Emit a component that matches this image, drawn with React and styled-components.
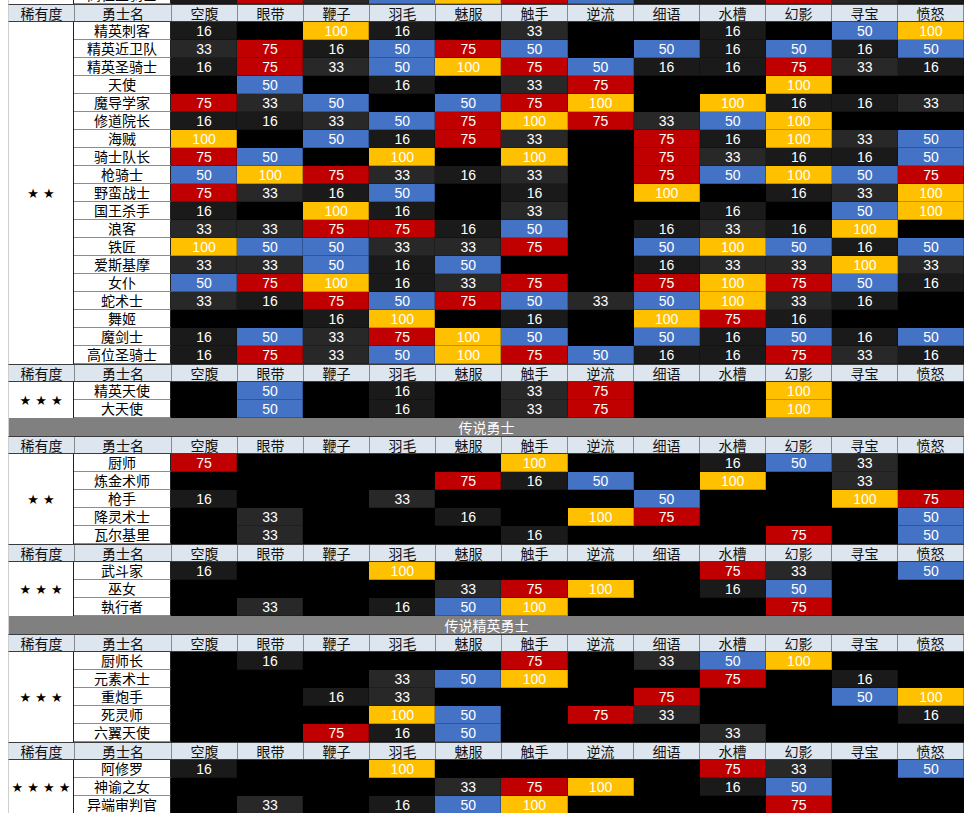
import React from "react";
import styled, { createGlobalStyle } from "styled-components";

const GlobalStyle = createGlobalStyle`
  html, body {
    margin: 0;
    padding: 0;
    background: #ffffff;
    overflow: hidden;
  }
  body {
    font-family: "Liberation Sans", "Noto Sans CJK SC", sans-serif;
  }
`;

const COLUMNS = ["空腹", "眼带", "鞭子", "羽毛", "魅服", "触手", "逆流", "细语", "水槽", "幻影", "寻宝", "愤怒"];

const CELL_BG = {
  0: "#000000",
  16: "#1a1a1a",
  33: "#282828",
  50: "#4472c4",
  75: "#c00000",
  100: "#ffc000",
};

const SHEET = [
  { kind: "rows", stars: 0, rows: [["高位圣骑士", [16, 75, 33, 50, 100, 75, 50, 16, 16, 75, 33, 16]]] },
  {
    kind: "group",
    stars: 2,
    rows: [
      ["精英刺客", [16, 0, 100, 16, 0, 33, 0, 0, 16, 0, 50, 100]],
      ["精英近卫队", [33, 75, 16, 50, 75, 50, 0, 50, 16, 50, 16, 50]],
      ["精英圣骑士", [16, 75, 33, 50, 100, 75, 50, 16, 16, 75, 33, 16]],
      ["天使", [0, 50, 0, 16, 0, 33, 75, 0, 0, 100, 0, 0]],
      ["魔导学家", [75, 33, 50, 0, 50, 75, 100, 0, 100, 16, 16, 33]],
      ["修道院长", [16, 16, 33, 50, 75, 100, 75, 33, 50, 100, 0, 0]],
      ["海贼", [100, 0, 50, 16, 75, 33, 0, 75, 16, 100, 33, 50]],
      ["骑士队长", [75, 50, 0, 100, 0, 100, 0, 75, 33, 16, 16, 50]],
      ["枪骑士", [50, 100, 75, 33, 16, 33, 0, 75, 50, 100, 50, 75]],
      ["野蛮战士", [75, 33, 16, 50, 0, 16, 0, 100, 0, 16, 33, 100]],
      ["国王杀手", [16, 0, 100, 16, 0, 33, 0, 0, 16, 0, 50, 100]],
      ["浪客", [33, 33, 75, 75, 16, 50, 0, 16, 33, 16, 100, 0]],
      ["铁匠", [100, 50, 50, 33, 33, 75, 0, 50, 100, 50, 16, 50]],
      ["爱斯基摩", [33, 33, 50, 16, 50, 0, 0, 16, 33, 33, 100, 33]],
      ["女仆", [50, 75, 100, 16, 33, 75, 0, 75, 100, 75, 50, 16]],
      ["蛇术士", [33, 16, 75, 50, 75, 50, 33, 50, 100, 33, 16, 0]],
      ["舞姬", [0, 0, 16, 100, 0, 16, 0, 100, 75, 16, 0, 0]],
      ["魔剑士", [16, 50, 33, 75, 100, 50, 0, 50, 16, 50, 16, 50]],
      ["高位圣骑士", [16, 75, 33, 50, 100, 75, 50, 16, 16, 75, 33, 16]],
    ],
  },
  {
    kind: "group",
    stars: 3,
    rows: [
      ["精英天使", [0, 50, 0, 16, 0, 33, 75, 0, 0, 100, 0, 0]],
      ["大天使", [0, 50, 0, 16, 0, 33, 75, 0, 0, 100, 0, 0]],
    ],
  },
  { kind: "banner", title: "传说勇士" },
  {
    kind: "group",
    stars: 2,
    rows: [
      ["厨师", [75, 0, 0, 0, 0, 100, 0, 0, 16, 50, 33, 0]],
      ["炼金术师", [0, 0, 0, 0, 75, 16, 50, 0, 100, 0, 33, 0]],
      ["枪手", [16, 0, 0, 33, 0, 0, 0, 50, 0, 0, 100, 75]],
      ["降灵术士", [0, 33, 0, 0, 16, 0, 100, 75, 0, 0, 0, 50]],
      ["瓦尔基里", [0, 33, 0, 0, 0, 16, 0, 0, 0, 75, 0, 50]],
    ],
  },
  {
    kind: "group",
    stars: 3,
    rows: [
      ["武斗家", [16, 0, 0, 100, 0, 0, 0, 0, 75, 33, 0, 50]],
      ["巫女", [0, 0, 0, 0, 33, 75, 100, 0, 16, 50, 0, 0]],
      ["執行者", [0, 33, 0, 16, 50, 100, 0, 0, 0, 75, 0, 0]],
    ],
  },
  { kind: "banner", title: "传说精英勇士" },
  {
    kind: "group",
    stars: 3,
    rows: [
      ["厨师长", [0, 16, 0, 0, 0, 75, 0, 33, 50, 100, 0, 0]],
      ["元素术士", [0, 0, 0, 33, 50, 100, 0, 0, 75, 0, 16, 0]],
      ["重炮手", [0, 0, 16, 33, 0, 0, 0, 75, 0, 0, 50, 100]],
      ["死灵师", [0, 0, 0, 100, 50, 0, 75, 33, 0, 0, 0, 16]],
      ["六翼天使", [0, 0, 75, 16, 50, 0, 0, 0, 33, 0, 0, 0]],
    ],
  },
  {
    kind: "group",
    stars: 4,
    rows: [
      ["阿修罗", [16, 0, 0, 100, 0, 0, 0, 0, 75, 33, 0, 50]],
      ["神谕之女", [0, 0, 0, 0, 33, 75, 100, 0, 16, 50, 0, 0]],
      ["异端审判官", [0, 33, 0, 16, 50, 100, 0, 0, 0, 75, 0, 0]],
    ],
  },
];

const Sheet = styled.div`
  width: 956px;
  margin: -14px 0 0 8px;
  display: flex;
  flex-direction: column;
`;

const HeaderRow = styled.div`
  display: grid;
  grid-template-columns: 66px 97px repeat(12, 1fr);
  height: 18px;
  box-sizing: border-box;
  background: #dde5ee;
  border-top: 1px solid #3c3c3c;
  border-bottom: 1px solid #3c3c3c;
  border-left: 1px solid #cfcfcf;
`;

const HeaderCell = styled.div`
  font-family: "Noto Sans CJK SC", sans-serif;
  font-size: 14px;
  line-height: 16px;
  color: #111;
  text-align: center;
  border-right: 1px solid #8a8a8a;
  overflow: hidden;
  white-space: nowrap;
`;

const Banner = styled.div`
  height: 18px;
  background: #808080;
  color: #ffffff;
  font-family: "Noto Sans CJK SC", sans-serif;
  font-size: 14px;
  line-height: 18px;
  text-align: center;
  border-left: 1px solid #cfcfcf;
  box-sizing: border-box;
`;

const Group = styled.div`
  display: flex;
`;

const Rarity = styled.div`
  width: 66px;
  flex: none;
  box-sizing: border-box;
  background: #ffffff;
  border-left: 1px solid #cfcfcf;
  border-right: 1px solid #222;
  display: flex;
  align-items: center;
  justify-content: center;
  font-family: "DejaVu Sans", sans-serif;
  font-size: 13px;
  color: #000;
`;

const Rows = styled.div`
  flex: 1;
  display: flex;
  flex-direction: column;
`;

const Row = styled.div`
  display: grid;
  grid-template-columns: 97px repeat(12, 1fr);
  height: 18px;
`;

const Name = styled.div`
  background: #ffffff;
  box-sizing: border-box;
  border-bottom: 1px solid #8c8c8c;
  border-right: 1px solid #222;
  font-family: "Noto Sans CJK SC", sans-serif;
  font-size: 14px;
  line-height: 17px;
  color: #000;
  text-align: center;
  white-space: nowrap;
  overflow: hidden;
`;

const Value = styled.div`
  background: ${(p) => CELL_BG[p.$v]};
  box-shadow: inset -1px -1px 0 rgba(0, 0, 0, 0.25);
  color: #ffffff;
  font-family: "Liberation Sans", sans-serif;
  font-size: 14px;
  line-height: 18px;
  text-align: center;
`;

const stars = (n) => Array.from({ length: n }, () => "★").join(" ");

const Header = () => (
  <HeaderRow>
    <HeaderCell>稀有度</HeaderCell>
    <HeaderCell>勇士名</HeaderCell>
    {COLUMNS.map((c) => (
      <HeaderCell key={c}>{c}</HeaderCell>
    ))}
  </HeaderRow>
);

const Block = ({ count, rows }) => (
  <Group>
    <Rarity>{count ? stars(count) : ""}</Rarity>
    <Rows>
      {rows.map(([name, values], i) => (
        <Row key={name + i}>
          <Name>{name}</Name>
          {values.map((v, j) => (
            <Value key={j} $v={v}>
              {v || ""}
            </Value>
          ))}
        </Row>
      ))}
    </Rows>
  </Group>
);

export default function App() {
  return (
    <>
      <GlobalStyle />
      <Sheet>
        {SHEET.map((part, i) => {
          if (part.kind === "banner") return <Banner key={i}>{part.title}</Banner>;
          if (part.kind === "rows") return <Block key={i} count={0} rows={part.rows} />;
          return (
            <React.Fragment key={i}>
              <Header />
              <Block count={part.stars} rows={part.rows} />
            </React.Fragment>
          );
        })}
      </Sheet>
    </>
  );
}
